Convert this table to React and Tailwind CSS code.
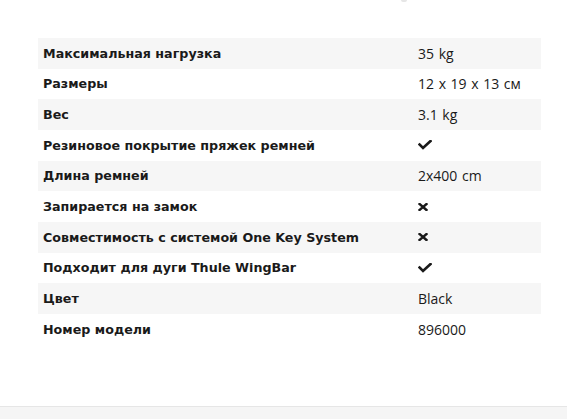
import React from "react";

const rows = [
  ["Максимальная нагрузка", "35 kg"],
  ["Размеры", "12 x 19 x 13 см"],
  ["Вес", "3.1 kg"],
  ["Резиновое покрытие пряжек ремней", "check"],
  ["Длина ремней", "2x400 cm"],
  ["Запирается на замок", "x"],
  ["Совместимость с системой One Key System", "x"],
  ["Подходит для дуги Thule WingBar", "check"],
  ["Цвет", "Black"],
  ["Номер модели", "896000"],
];

function Check() {
  return (
    <svg width="14" height="10" viewBox="0 0 14 10" className="block">
      <path d="M1.5 4.5 L5 8 L12.5 1" fill="none" stroke="#1a1a1a" strokeWidth="2.6" strokeLinecap="square" strokeLinejoin="miter" />
    </svg>
  );
}

function Cross() {
  return (
    <svg width="10" height="8" viewBox="0 0 10 8" className="block">
      <path d="M1.5 1 L8.5 7 M8.5 1 L1.5 7" fill="none" stroke="#1a1a1a" strokeWidth="2.4" strokeLinecap="square" />
    </svg>
  );
}

export default function App() {
  return (
    <div className="relative w-[567px] h-[419px] bg-white overflow-hidden flex flex-col">
      <div className="absolute left-[401px] top-0 w-[6px] h-[2px] rounded-b-full bg-[#e6e6e6]" />
      <div className="flex-1 pt-[38px] pl-[38px]">
        <div className="w-[503px] flex flex-col">
          {rows.map(([label, value], i) => (
            <div
              key={i}
              className={`flex items-center h-[30.667px] ${i % 2 === 0 ? "bg-[#f6f6f6]" : "bg-white"}`}
            >
              <div
                className="w-[375px] pl-[5px] text-[12.7px] font-bold text-[#1a1a1a] whitespace-nowrap"
                style={{ fontFamily: "'DejaVu Sans', Verdana, sans-serif" }}
              >
                {label}
              </div>
              <div
                className="flex-1 pl-[5px] text-[14px] text-[#1a1a1a] whitespace-nowrap [word-spacing:1px]"
                style={{ fontFamily: "'Open Sans', sans-serif" }}
              >
                {value === "check" ? <Check /> : value === "x" ? <Cross /> : value}
              </div>
            </div>
          ))}
        </div>
      </div>
      <div className="h-[13px] border-t border-[#e6e6e6] bg-[#f5f5f5]" />
    </div>
  );
}
